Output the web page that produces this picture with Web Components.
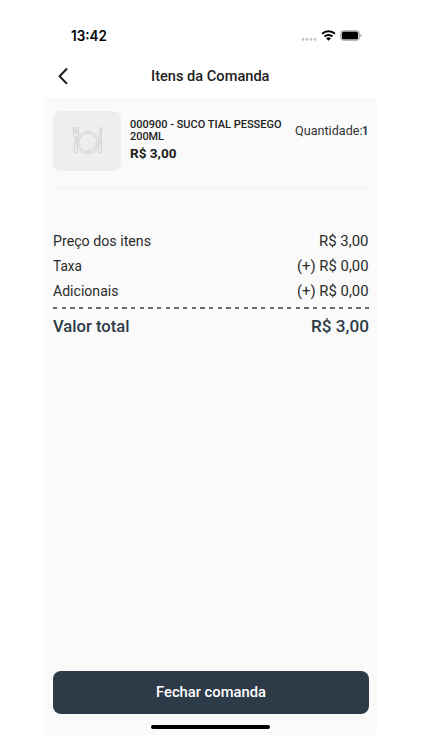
<!DOCTYPE html>
<html lang="pt-BR">
<head>
<meta charset="utf-8">
<title>Itens da Comanda</title>
<style>
html,body{margin:0;background:#fff}
body{width:422px;height:750px;overflow:hidden;font-family:Roboto,"Liberation Sans",sans-serif}
</style>
</head>
<body>
<order-screen></order-screen>
<script>
function define(name, html, after) {
  const t = document.createElement('template');
  t.innerHTML = html;
  customElements.define(name, class extends HTMLElement {
    connectedCallback() {
      if (this.shadowRoot) return;
      this.attachShadow({mode: 'open'}).append(t.content.cloneNode(true));
      if (after) after(this);
    }
  });
}

// Text label whose glyphs are widened so that it fills the width in "w".
define('fit-text', `<style>
:host{display:block;white-space:nowrap;flex:none}
span{display:inline-block;transform-origin:0 50%;vertical-align:top}
</style><span><slot></slot></span>`, el => {
  const span = el.shadowRoot.querySelector('span');
  const w = +el.getAttribute('w');
  const natural = span.getBoundingClientRect().width;
  span.style.transform = 'scaleX(' + w / natural + ')';
  el.style.width = w + 'px';
});

define('status-bar', `<style>
:host{display:flex;align-items:center;justify-content:space-between;height:60px;padding:12px 15px 0 27px;box-sizing:border-box;color:#000}
fit-text{font:600 14px/20px Inter,sans-serif}
svg{display:block}
</style>
<fit-text w="36">13:42</fit-text>
<svg width="61" height="14" viewBox="0 0 61 14">
<g fill="#c4c4c4"><circle cx="2.1" cy="10.4" r="1.35"/><circle cx="6.1" cy="10.4" r="1.35"/><circle cx="10.1" cy="10.4" r="1.35"/><circle cx="14.1" cy="10.4" r="1.35"/></g>
<g transform="translate(.6 .4)"><g fill="none" stroke="#000" stroke-width="2"><path d="M20.5 4.3a9.3 9.3 0 0 1 12.800 0"/><path d="M22.9 7.1a5.8 5.8 0 0 1 8 0"/></g>
<path d="M24.5 9a3.5 3.5 0 0 1 4.8 0L26.9 11.3z"/></g>
<rect x="39.7" y="1.7" width="18.700" height="9.6" rx="2.8" fill="#ccc" stroke="#aaa" stroke-width="1"/>
<rect x="41" y="2.8" width="16" height="7.400" rx="1.5"/>
<path d="M59.5 5q1.300.4 1.300 1.500t-1.300 1.500z" fill="#999"/>
</svg>`);

define('title-bar', `<style>
:host{display:grid;grid-template-columns:40px 1fr 40px;align-items:center;height:38px;padding-bottom:6px;box-sizing:border-box;color:#212121}
svg{display:block;margin-left:13px}
fit-text{justify-self:center;font-weight:500;font-size:14px;line-height:18px}
</style>
<svg width="14" height="18" viewBox="0 0 14 18" fill="none" stroke="#1c1c1c" stroke-width="2"><path d="M10 1.5 2.6 9.2 10 16.9"/></svg>
<fit-text w="118.5">Itens da Comanda</fit-text>`);

define('plate-thumb', `<style>
:host{display:grid;place-items:center;width:68px;height:60px;border-radius:8px;background:#eee;flex:none}
svg{display:block}
</style>
<svg width="32" height="30" viewBox="0 0 32 30" fill="none" stroke="#c6c6c6" stroke-width=".7">
<circle cx="17" cy="16.500" r="11"/><circle cx="17" cy="16.500" r="9.2"/>
<path d="M17 23.800a7.3 7.3 0 0 0 7.2-7.3" stroke="#d8d8d8"/>
<path d="M2.300 1v7.3q.2 1.700 1.600 2.200v6H3.200v9.700q1.500 1.700 3 0v-9.700H5.500v-6Q7.100 10 7.300 8.300V1M4 1v7M5.600 1v7" fill="#eee"/>
<path d="M28.900 16.500V6q.3-3.700 1.600-5.200V26.200q-1.400 1.700-2.800 0v-9.700h2.800" fill="#eee"/>
</svg>`);

define('order-item', `<style>
:host{display:flex;align-items:flex-start;height:77px;box-sizing:border-box;border-bottom:1px solid #f0f0f0;color:#212121}
.info{padding:8.5px 0 0 9px;flex:1;font-weight:500;font-size:10.500px;line-height:12px}
.price{font-weight:700;font-size:12.500px;line-height:16px;margin-top:3px}
.qty{display:flex;font-size:12.700px;line-height:16px;padding-top:12px;color:#333}
.qty fit-text+fit-text{font-weight:700;color:#2d3a48}
</style>
<plate-thumb></plate-thumb>
<div class="info"><fit-text w="151.5">000900 - SUCO TIAL PESSEGO</fit-text><fit-text w="34">200ML</fit-text><fit-text class="price" w="46.5">R$ 3,00</fit-text></div>
<div class="qty"><fit-text w="67.5">Quantidade:</fit-text><fit-text w="6.5">1</fit-text></div>`);

define('sum-row', `<style>
:host{display:flex;justify-content:space-between;height:24.800px;font-size:14px;line-height:24.800px;color:#2b2b2b}
:host([total]){font-size:15.800px;font-weight:500;color:#2d3a48}
</style><slot></slot>`);

define('dash-line', `<style>
:host{display:block;height:1.500px;background:repeating-linear-gradient(90deg,#6c6c6c 0 4.300px,transparent 4.300px 8.670px)}
</style>`);

define('primary-button', `<style>
:host{display:grid;place-items:center;height:43px;border-radius:8px;background:#2d3a48;color:#fff;font-weight:500;font-size:14px;line-height:18px}
fit-text{margin-top:-1px}
</style><slot></slot>`);

define('order-screen', `<style>
:host{display:block;width:333px;height:750px;margin-left:44px}
main{display:flex;flex-direction:column;height:637px;box-sizing:border-box;padding:12.5px 8.5px 6.5px 9px;background:#fafafa}
.sum{padding-top:41.5px}
dash-line{margin:3.800px 0 6px}
.space{flex:1}
.home{width:119px;height:4px;border-radius:2px;background:#000;margin:10.5px auto 0}
primary-button fit-text{margin-top:-1px}
</style>
<status-bar></status-bar>
<title-bar></title-bar>
<main>
<order-item></order-item>
<div class="sum">
<sum-row><fit-text w="98">Preço dos itens</fit-text><fit-text w="49.5">R$ 3,00</fit-text></sum-row>
<sum-row><fit-text w="29">Taxa</fit-text><fit-text w="71.5">(+) R$ 0,00</fit-text></sum-row>
<sum-row><fit-text w="65.5">Adicionais</fit-text><fit-text w="71.5">(+) R$ 0,00</fit-text></sum-row>
<dash-line></dash-line>
<sum-row total><fit-text w="76.5">Valor total</fit-text><fit-text w="58">R$ 3,00</fit-text></sum-row>
</div>
<div class="space"></div>
<primary-button><fit-text w="110">Fechar comanda</fit-text></primary-button>
<div class="home"></div>
</main>`);
</script>
</body>
</html>
